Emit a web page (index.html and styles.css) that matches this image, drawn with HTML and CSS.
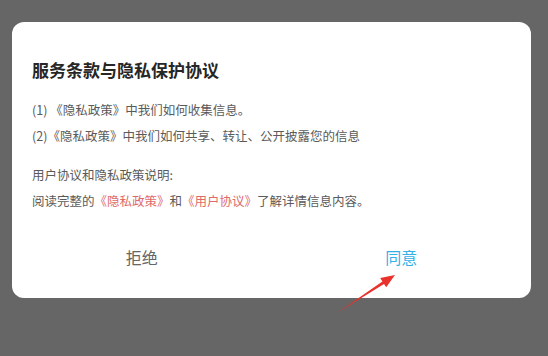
FILE: index.html
```html
<!DOCTYPE html>
<html lang="zh-CN">
<head>
<meta charset="utf-8">
<title>服务条款与隐私保护协议</title>
<link rel="stylesheet" href="styles.css">
</head>
<body>
<div class="screen">
  <div class="dialog">
    <h1 class="title">服务条款与隐私保护协议</h1>
    <div class="section">
      <p class="line">(1) 《隐私政策》中我们如何收集信息。</p>
      <p class="line">(2)《隐私政策》中我们如何共享、转让、公开披露您的信息</p>
    </div>
    <div class="section section-second">
      <p class="line">用户协议和隐私政策说明:</p>
      <p class="line">阅读完整的<span class="link">《隐私政策》</span>和<span class="link">《用户协议》</span>了解详情信息内容。</p>
    </div>
    <div class="actions">
      <div class="btn btn-reject">拒绝</div>
      <div class="btn btn-agree">同意</div>
    </div>
  </div>
  <svg class="arrow" width="70" height="50" viewBox="0 0 70 50">
    <polygon points="7,45 52.4,13.4 50.2,10.1 65,7 56.2,19.3 54,16" fill="#e8322b"/>
  </svg>
</div>
</body>
</html>
```

FILE: styles.css
```css
html, body {
  margin: 0;
  padding: 0;
}
body {
  background: #666666;
  width: 548px;
  height: 356px;
  overflow: hidden;
  font-family: "Noto Sans CJK SC", "Noto Sans", sans-serif;
}
.screen {
  position: relative;
  width: 548px;
  height: 356px;
  padding: 22px 17px 0 12px;
  box-sizing: border-box;
}
.dialog {
  background: #ffffff;
  border-radius: 12px;
  width: 519px;
  height: 276px;
  box-sizing: border-box;
  padding: 36px 20px 0 20px;
  display: flex;
  flex-direction: column;
}
.title {
  margin: 0;
  font-size: 17px;
  line-height: 24px;
  font-weight: bold;
  color: #262626;
}
.section {
  margin-top: 15px;
}
.section-second {
  margin-top: 13px;
}
.line {
  margin: 0;
  font-size: 12.5px;
  line-height: 26px;
  color: #5a5a5a;
  white-space: nowrap;
}
.link {
  color: #e06a6a;
}
.actions {
  display: flex;
  flex: 1;
  margin: 0 -20px;
  align-items: center;
  padding-top: 2px;
}
.btn {
  flex: 1;
  text-align: center;
  font-size: 16px;
  line-height: 24px;
}
.btn-reject {
  color: #666666;
}
.btn-agree {
  color: #35b0e6;
}
.arrow {
  position: absolute;
  left: 330px;
  top: 268px;
}
```
